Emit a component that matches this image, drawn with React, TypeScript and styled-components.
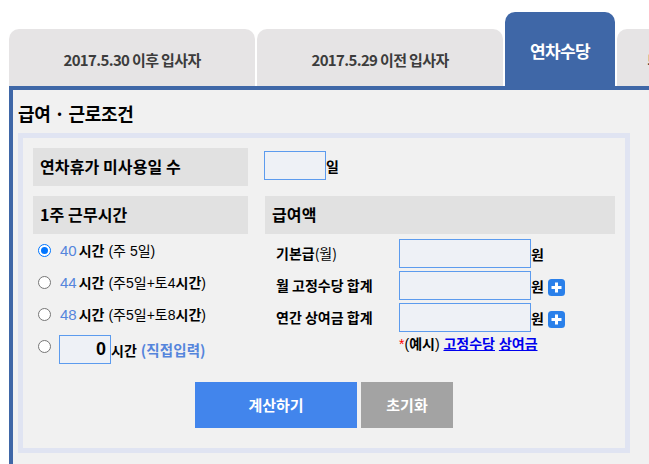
import React from "react";
import styled, { createGlobalStyle } from "styled-components";

const Global = createGlobalStyle`
  html, body { margin: 0; padding: 0; background: #fff; overflow: hidden; }
  body { width: 649px; height: 464px; font-family: "Noto Sans CJK KR", "Liberation Sans", sans-serif; color: #000; }
`;
const Page = styled.div`
  width: 649px; height: 464px; overflow: hidden; padding: 12px 0 0 9px; box-sizing: border-box;
`;
const Tabs = styled.div`
  display: flex; gap: 2px; align-items: flex-end; height: 74px; width: 800px;
`;
const Tab = styled.div<{ $w: number; $active?: boolean }>`
  width: ${p => p.$w}px; height: ${p => (p.$active ? 74 : 57)}px; flex: none; box-sizing: border-box;
  border-radius: 10px 10px 0 0;
  background: ${p => (p.$active ? "#3f67a7" : "#e6e4e5")};
  color: ${p => (p.$active ? "#fff" : "#3c3c3c")};
  font-size: ${p => (p.$active ? 17 : 15)}px; font-weight: 700;
  letter-spacing: ${p => (p.$active ? "-0.6px" : "-0.65px")};
  text-align: center; line-height: ${p => (p.$active ? 78 : 61)}px;
`;
const Panel = styled.div`
  width: 800px; height: 378px; box-sizing: border-box; background: #f1f1f1;
  border-top: 4px solid #3f67a7; border-left: 4px solid #3f67a7; padding: 0 0 0 5px;
`;
const Heading = styled.h2`
  margin: 0; height: 43px; font-size: 18px; font-weight: 700; line-height: 47px; letter-spacing: -0.3px;
`;
const Box = styled.div`
  width: 612px; height: 320px; box-sizing: border-box; border: 5px solid #e0e4f2; padding: 10px 10px 0 10px;
`;
const Row = styled.div`
  display: grid; grid-template-columns: 215px 350px; column-gap: 17px;
`;
const TopRow = styled(Row)`
  height: 48px;
`;
const SectionTitle = styled.div`
  height: 38px; background: #e1e1e1; font-size: 16px; font-weight: 700; line-height: 37px; padding-left: 7px; letter-spacing: 0.1px;
`;
const DaysCell = styled.div`
  display: flex; align-items: flex-start; padding-top: 3px; margin-left: -1px; font-size: 14px; font-weight: 700;
`;
const Field = styled.div<{ $w: number }>`
  width: ${p => p.$w}px; height: 29px; flex: none; box-sizing: border-box; background: #eef1f6;
  border: 1px solid #5c9bee; font-size: 18px; font-weight: 700; text-align: right; padding-right: 4px; line-height: 27px;
  font-family: "Liberation Sans", sans-serif;
`;
const Unit = styled.span`
  line-height: 30px; font-size: 14px; font-weight: 700;
`;
const Columns = styled(Row)`
  height: 186px;
`;
const Options = styled.div`
  display: flex; flex-direction: column;
`;
const Option = styled.label<{ $h?: number }>`
  display: flex; align-items: center; height: ${p => p.$h ?? 32}px; font-size: 14px; font-weight: 400;
  padding-left: 5px;
`;
const Radio = styled.span<{ $on?: boolean }>`
  width: 13px; height: 13px; box-sizing: border-box; border-radius: 50%; flex: none; margin-right: 9px; background: #fff;
  border: ${p => (p.$on ? "1px solid #0075ff" : "1px solid #767676")};
  display: flex; align-items: center; justify-content: center;
  &::after { content: ""; display: ${p => (p.$on ? "block" : "none")}; width: 7px; height: 7px; border-radius: 50%; background: #0075ff; }
`;
const RadioTop = styled(Radio)`
  align-self: flex-start; margin-top: 10px; margin-right: 8px;
`;
const Hours = styled.span`
  color: #5585dc; font-family: "Liberation Sans", sans-serif; font-size: 15px;
`;
const B = styled.b`
  font-weight: 700; margin-left: 2px;
`;
const Detail = styled.span`
  margin-left: 4px; font-family: "Liberation Sans", "Noto Sans CJK KR", sans-serif;
`;
const Direct = styled.span`
  color: #5585dc; font-weight: 700; margin-left: 4px; font-size: 14.5px; letter-spacing: 0.1px;
`;
const Pay = styled.div`
  display: flex; flex-direction: column; gap: 3px; padding-top: 5px;
`;
const PayRow = styled.div`
  display: flex; align-items: center; height: 29px;
`;
const PayLabel = styled.div`
  width: 134px; flex: none; padding-left: 11px; box-sizing: border-box; font-size: 14px; font-weight: 700; margin-top: -2px;
`;
const Light = styled.span`
  font-weight: 400;
`;
const Plus = styled.span`
  width: 17px; height: 17px; margin: -1px 0 0 4px; flex: none; display: block;
`;
const Note = styled.div`
  margin: 2px 0 0 134px; font-size: 14px; line-height: 20px; font-family: "Liberation Sans", "Noto Sans CJK KR", sans-serif;
`;
const Star = styled.span`
  color: #f00;
`;
const NoteLink = styled.a`
  color: #0000ee; font-weight: 700; text-decoration: underline;
`;
const Buttons = styled.div`
  display: flex; gap: 4px; margin: 0 0 0 162px;
`;
const Btn = styled.div<{ $w: number; $bg: string }>`
  width: ${p => p.$w}px; height: 46px; background: ${p => p.$bg}; color: #fff; text-align: center;
  font-size: 15px; font-weight: 700; line-height: 45px;
`;

const PlusIcon = () => (
  <Plus>
    <svg width="17" height="17" viewBox="0 0 17 17">
      <rect width="17" height="17" rx="3.5" fill="#2a80ea" />
      <path d="M8.5 3.5v10M3.5 8.5h10" stroke="#fff" strokeWidth="3" />
    </svg>
  </Plus>
);

export default function App() {
  return (
    <Page>
      <Global />
      <Tabs>
        <Tab $w={246}>2017.5.30 이후 입사자</Tab>
        <Tab $w={246}>2017.5.29 이전 입사자</Tab>
        <Tab $w={110} $active>연차수당</Tab>
        <Tab $w={100}>퇴직금</Tab>
      </Tabs>
      <Panel>
        <Heading>급여 · 근로조건</Heading>
        <Box>
          <TopRow>
            <SectionTitle>연차휴가 미사용일 수</SectionTitle>
            <DaysCell><Field $w={62} /><Unit>일</Unit></DaysCell>
          </TopRow>
          <Columns>
            <div>
              <SectionTitle>1주 근무시간</SectionTitle>
              <Options>
                <Option><Radio $on /><Hours>40</Hours><B>시간</B><Detail>(주 5일)</Detail></Option>
                <Option><Radio /><Hours>44</Hours><B>시간</B><Detail>(주5일+토4<b>시간</b>)</Detail></Option>
                <Option><Radio /><Hours>48</Hours><B>시간</B><Detail>(주5일+토8<b>시간</b>)</Detail></Option>
                <Option $h={39}><RadioTop /><Field $w={52}>0</Field><Unit>시간</Unit><Direct>(직접입력)</Direct></Option>
              </Options>
            </div>
            <div>
              <SectionTitle>급여액</SectionTitle>
              <Pay>
                <PayRow><PayLabel>기본급<Light>(월)</Light></PayLabel><Field $w={132} /><Unit>원</Unit></PayRow>
                <PayRow><PayLabel>월 고정수당 합계</PayLabel><Field $w={132} /><Unit>원</Unit><PlusIcon /></PayRow>
                <PayRow><PayLabel>연간 상여금 합계</PayLabel><Field $w={132} /><Unit>원</Unit><PlusIcon /></PayRow>
              </Pay>
              <Note><Star>*</Star>(<b>예시</b>) <NoteLink>고정수당</NoteLink> <NoteLink>상여금</NoteLink></Note>
            </div>
          </Columns>
          <Buttons>
            <Btn $w={162} $bg="#4285ec">계산하기</Btn>
            <Btn $w={92} $bg="#a3a3a3">초기화</Btn>
          </Buttons>
        </Box>
      </Panel>
    </Page>
  );
}
